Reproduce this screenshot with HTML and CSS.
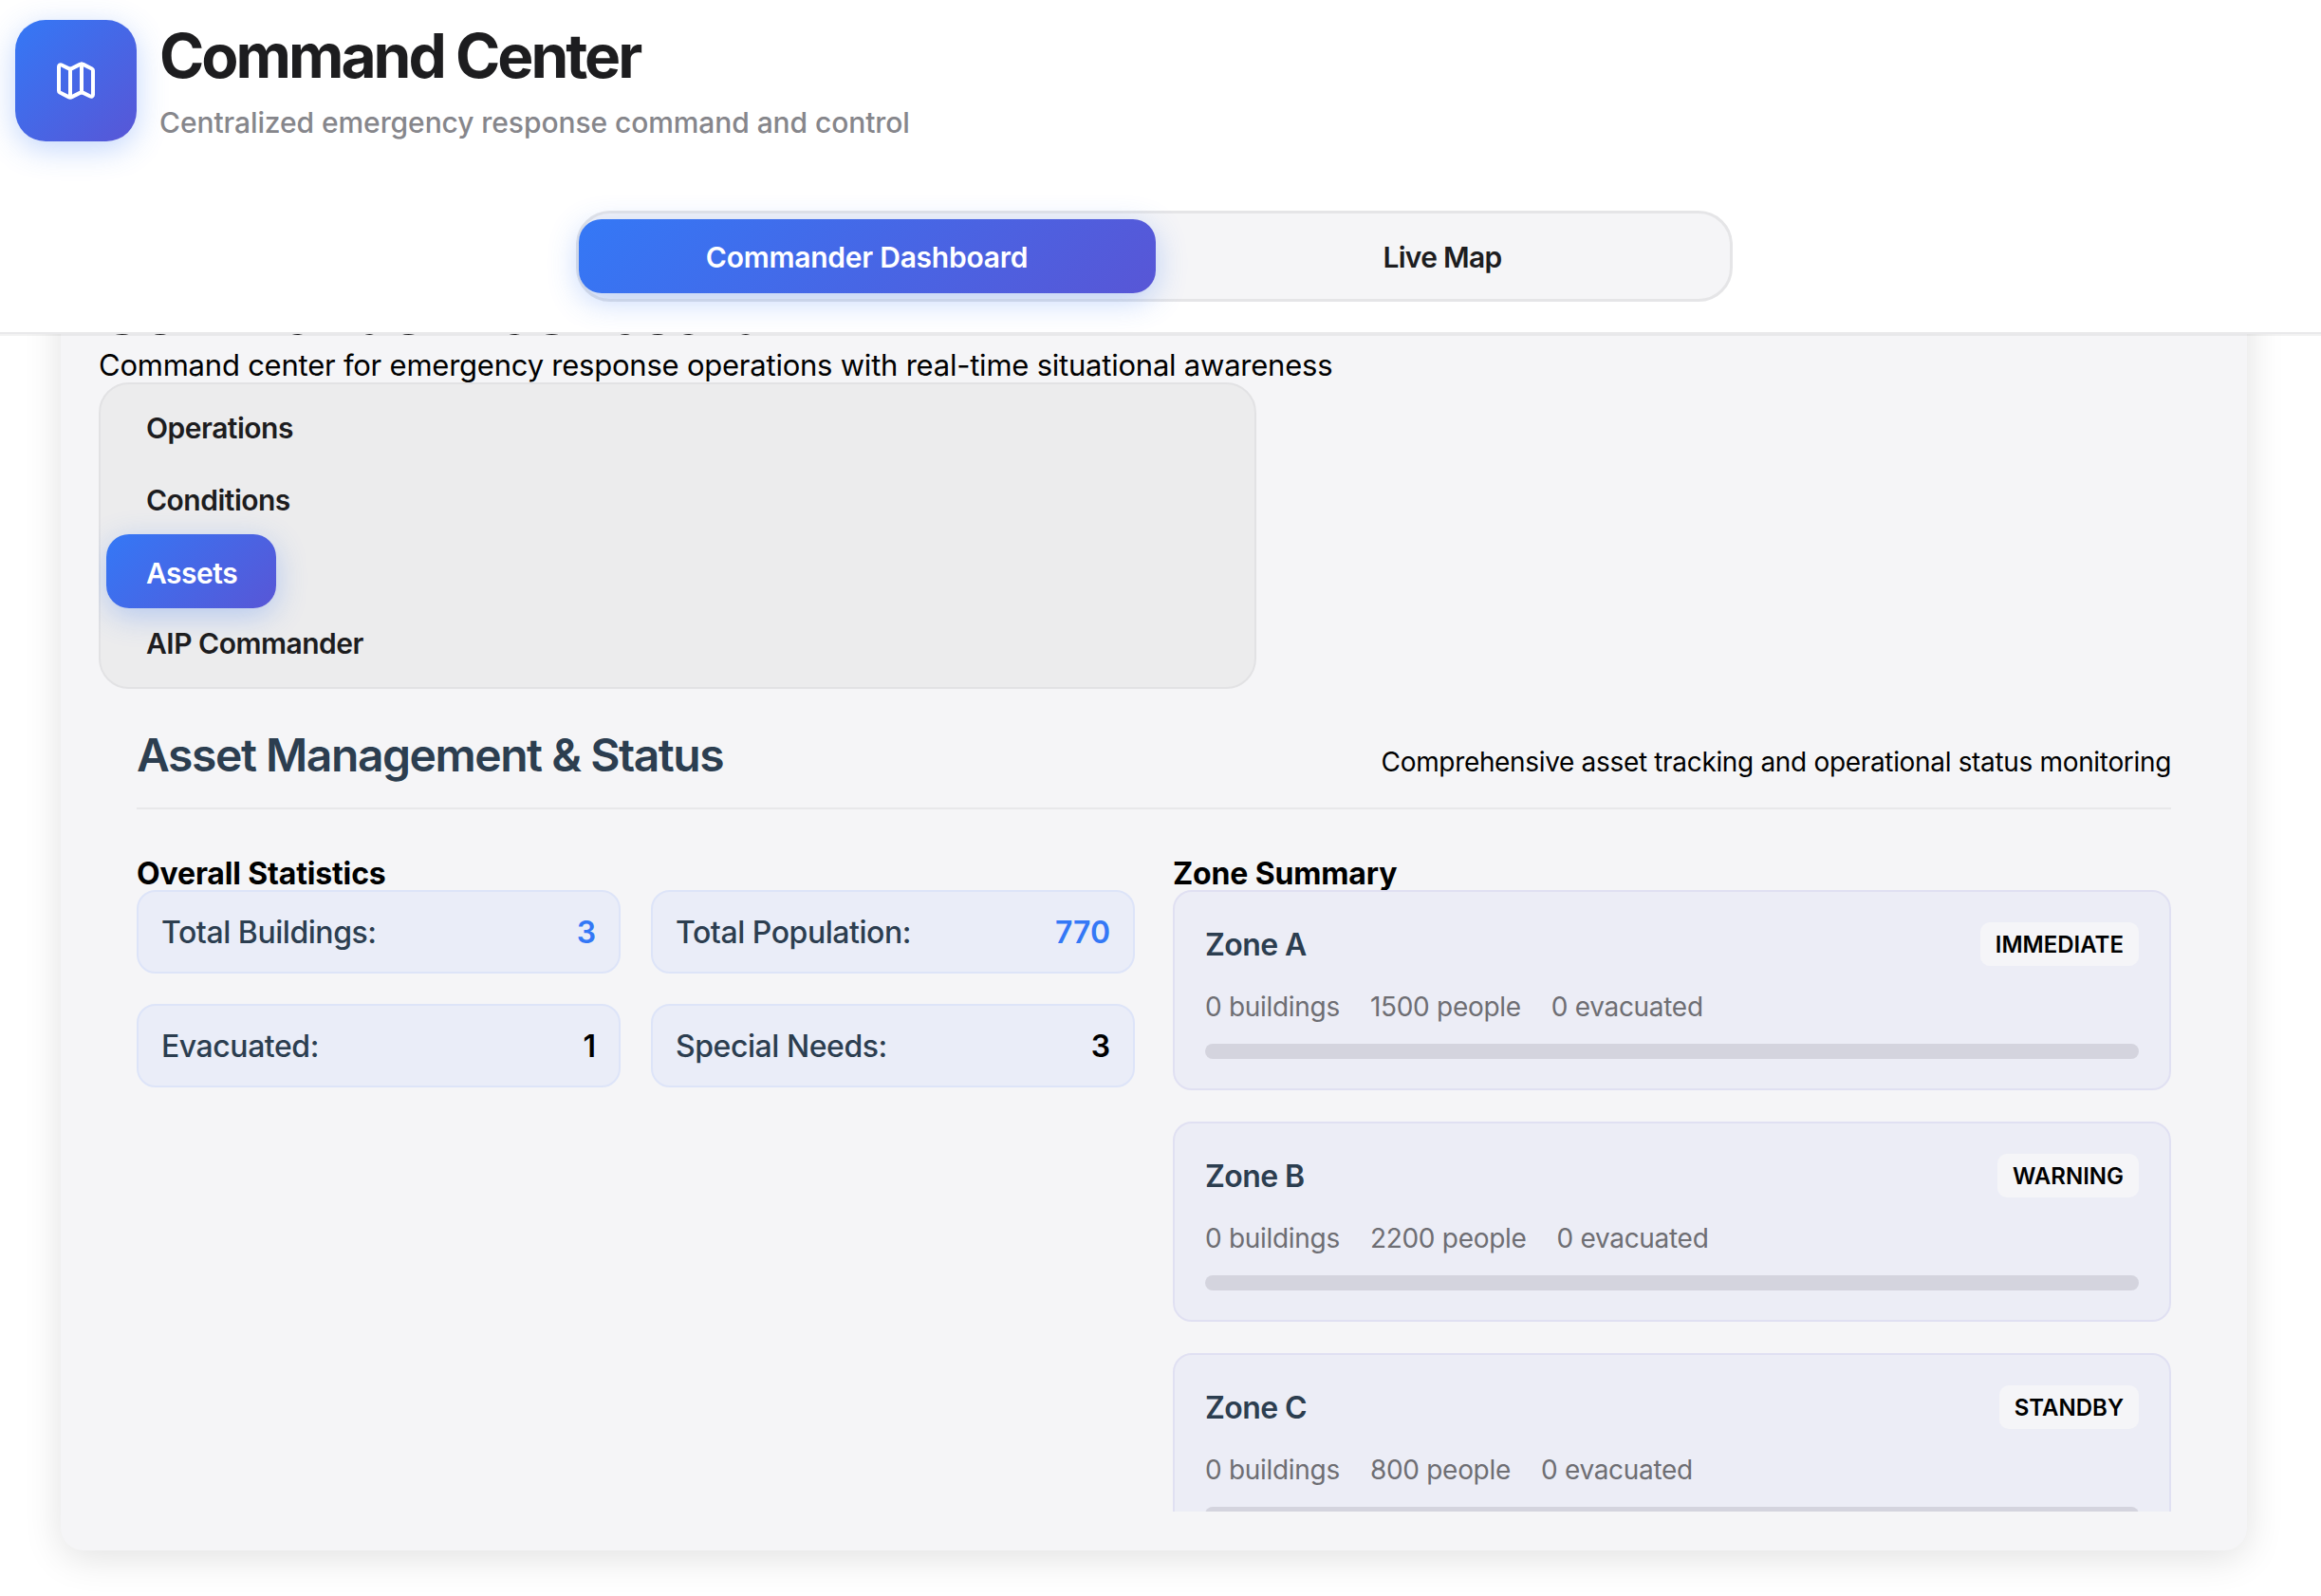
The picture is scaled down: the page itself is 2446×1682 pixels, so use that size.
FILE: index.html
```html
<!DOCTYPE html>
<html lang="en">
<head>
<meta charset="utf-8">
<title>Command Center</title>
<link rel="stylesheet" href="styles.css">
</head>
<body>
<header class="app-header">
  <div class="brand">
    <div class="brand-icon">
      <svg class="map-icon" viewBox="0 0 24 24" width="48" height="48" fill="none" stroke="#fff" stroke-width="2" stroke-linecap="round" stroke-linejoin="round">
        <path d="M14.106 5.553a2 2 0 0 0 1.788 0l3.659-1.83A1 1 0 0 1 21 4.619v12.764a1 1 0 0 1-.553.894l-4.553 2.277a2 2 0 0 1-1.788 0l-4.212-2.106a2 2 0 0 0-1.788 0l-3.659 1.83A1 1 0 0 1 3 19.381V6.618a1 1 0 0 1 .553-.894l4.553-2.277a2 2 0 0 1 1.788 0z"/>
        <path d="M15 5.764v15"/>
        <path d="M9 3.236v15"/>
      </svg>
    </div>
    <div class="brand-text">
      <h1 class="brand-title">Command Center</h1>
      <p class="brand-sub">Centralized emergency response command and control</p>
    </div>
  </div>
  <nav class="view-nav">
    <div class="view-tabs">
      <button class="view-tab view-tab-active">Commander Dashboard</button>
      <button class="view-tab">Live Map</button>
    </div>
  </nav>
</header>

<main class="panel">
  <div class="panel-scroll">
    <h2 class="panel-title">Commander Dashboard</h2>
    <p class="panel-desc">Command center for emergency response operations with real-time situational awareness</p>
    <div class="side-tabs">
      <button class="side-tab">Operations</button>
      <button class="side-tab">Conditions</button>
      <button class="side-tab side-tab-active">Assets</button>
      <button class="side-tab">AIP Commander</button>
    </div>
    <section class="assets">
      <div class="assets-head">
        <h3 class="assets-title">Asset Management &amp; Status</h3>
        <p class="assets-note">Comprehensive asset tracking and operational status monitoring</p>
      </div>
      <div class="assets-grid">
        <div class="col">
          <h4 class="col-title">Overall Statistics</h4>
          <div class="stats">
            <div class="stat"><span>Total Buildings:</span><strong class="stat-blue">3</strong></div>
            <div class="stat"><span>Total Population:</span><strong class="stat-blue">770</strong></div>
            <div class="stat"><span>Evacuated:</span><strong>1</strong></div>
            <div class="stat"><span>Special Needs:</span><strong>3</strong></div>
          </div>
        </div>
        <div class="col">
          <h4 class="col-title">Zone Summary</h4>
          <div class="zones">
            <article class="zone">
              <div class="zone-head"><span class="zone-name">Zone A</span><span class="zone-badge">IMMEDIATE</span></div>
              <div class="zone-meta"><span>0 buildings</span><span>1500 people</span><span>0 evacuated</span></div>
              <div class="zone-bar"></div>
            </article>
            <article class="zone">
              <div class="zone-head"><span class="zone-name">Zone B</span><span class="zone-badge">WARNING</span></div>
              <div class="zone-meta"><span>0 buildings</span><span>2200 people</span><span>0 evacuated</span></div>
              <div class="zone-bar"></div>
            </article>
            <article class="zone">
              <div class="zone-head"><span class="zone-name">Zone C</span><span class="zone-badge">STANDBY</span></div>
              <div class="zone-meta"><span>0 buildings</span><span>800 people</span><span>0 evacuated</span></div>
              <div class="zone-bar"></div>
            </article>
          </div>
        </div>
      </div>
    </section>
  </div>
</main>
</body>
</html>
```
FILE: styles.css
```css
* { box-sizing: border-box; }
html, body { margin: 0; padding: 0; }
body {
  width: 2446px;
  height: 1682px;
  overflow: hidden;
  background: #fff;
  font-family: Inter, "Liberation Sans", sans-serif;
  color: #000;
}
h1, h2, h3, h4, p { margin: 0; }
button { font: inherit; border: 0; background: none; cursor: pointer; }

.app-header {
  position: relative;
  z-index: 2;
  height: 352px;
  padding: 21px 14px 0 16px;
  background: #fff;
  border-bottom: 2px solid #e9e9eb;
  box-shadow: 0 2px 0 rgba(0, 0, 0, 0.05);
}
.brand { display: flex; gap: 24px; align-items: flex-start; height: 128px; }
.brand-icon {
  width: 128px;
  height: 128px;
  border-radius: 32px;
  background: linear-gradient(135deg, #3478f6, #5856d6);
  box-shadow: 0 8px 32px rgba(52, 120, 246, 0.3);
  display: flex;
  align-items: center;
  justify-content: center;
}
.map-icon { transform: scaleX(-1); }
.brand-title {
  font-size: 64px;
  line-height: 76px;
  font-weight: 700;
  letter-spacing: -3px;
  color: #1d1d1f;
}
.brand-sub {
  margin-top: 13.5px;
  font-size: 30px;
  line-height: 36px;
  font-weight: 500;
  letter-spacing: -0.08px;
  color: #86868b;
}
.view-nav { display: flex; justify-content: center; margin: 73px 0 0 -16px; }
.view-tabs {
  display: flex;
  width: 1219px;
  padding: 6px 0;
  background: #f5f5f7;
  border: 3px solid #e5e5e7;
  border-radius: 36px;
}
.view-tab {
  flex: 1;
  height: 78px;
  padding-top: 2px;
  border-radius: 24px;
  font-size: 30px;
  font-weight: 600;
  letter-spacing: -0.7px;
  color: #1d1d1f;
}
.view-tab-active {
  flex: none;
  width: 608px;
  letter-spacing: -0.25px;
  color: #fff;
  background: linear-gradient(135deg, #3478f6, #5856d6);
  box-shadow: 0 8px 32px rgba(52, 120, 246, 0.3);
}

.panel {
  width: 2304px;
  height: 1400px;
  margin: -118px 0 0 64px;
  padding: 0 40px 41px;
  background: #f5f5f7;
  border-radius: 24px;
  box-shadow: 0 8px 40px rgba(0, 0, 0, 0.12);
  display: flex;
}
.panel-scroll { flex: 1; min-width: 0; overflow: hidden; padding-top: 57px; }
.panel-title {
  font-size: 64px;
  line-height: 76px;
  height: 66px;
  font-weight: 700;
  letter-spacing: -2px;
  color: #1d1d1f;
}
.panel-desc {
  font-size: 31px;
  line-height: 38px;
  height: 37px;
  margin-top: 9px;
  letter-spacing: -0.23px;
}

.side-tabs {
  display: flex;
  flex-direction: column;
  align-items: flex-start;
  width: 1220px;
  padding: 8px 6px;
  background: #ececed;
  border: 2px solid #e2e2e4;
  border-radius: 32px;
}
.side-tab {
  padding: 0 42px;
  height: 75.75px;
  border-radius: 24px;
  font-size: 30px;
  font-weight: 600;
  letter-spacing: -0.5px;
  color: #1d1d1f;
}
.side-tab-active {
  height: 78px;
  margin: -1.125px 0;
  padding: 3px 41px 0 42px;
  color: #fff;
  background: linear-gradient(135deg, #3478f6, #5856d6);
  box-shadow: 0 8px 32px rgba(52, 120, 246, 0.3);
}

.assets { padding: 0 40px; margin-top: 39px; }
.assets-head {
  display: flex;
  justify-content: space-between;
  align-items: flex-end;
  padding-bottom: 23.5px;
  border-bottom: 2px solid #e8e8ea;
}
.assets-title { font-size: 48px; line-height: 62px; font-weight: 600; color: #2c3e50; letter-spacing: -1.45px; }
.assets-note { font-size: 28px; line-height: 34px; margin-bottom: 7px; letter-spacing: -0.33px; }

.assets-grid { display: grid; grid-template-columns: 1052px 1052px; gap: 40px; margin-top: 49.5px; }
.col-title { font-size: 32px; line-height: 38px; font-weight: 700; height: 36px; letter-spacing: -0.15px; }
.stats { display: grid; grid-template-columns: 510px 510px; gap: 32px; }
.stat {
  height: 88px;
  padding: 0 24px;
  display: flex;
  align-items: center;
  justify-content: space-between;
  background: #eaedf8;
  border: 2px solid #dde4f8;
  border-radius: 20px;
  font-size: 32px;
  font-weight: 500;
  letter-spacing: -0.45px;
  color: #2c3e50;
}
.stat strong { font-weight: 600; letter-spacing: 0; color: #000; }
.stat .stat-blue { color: #3478f6; }

.zones { display: flex; flex-direction: column; gap: 33px; }
.zone {
  height: 211px;
  flex: none;
  padding: 32px;
  background: #ecedf6;
  border: 2px solid #e0e0f2;
  border-radius: 20px;
}
.zone-head { display: flex; justify-content: space-between; align-items: center; }
.zone-name { font-size: 32px; font-weight: 600; letter-spacing: -0.6px; color: #2c3e50; }
.zone-badge {
  height: 46px;
  padding: 0 16px;
  display: flex;
  align-items: center;
  background: #f5f5f8;
  border-radius: 10px;
  font-size: 24px;
  font-weight: 600;
  color: #000;
}
.zone-meta {
  display: flex;
  gap: 32px;
  margin-top: 26px;
  font-size: 28px;
  line-height: 34px;
  letter-spacing: -0.3px;
  color: #6e6e73;
}
.zone-bar { height: 16px; margin-top: 22px; background: #d4d4de; border-radius: 8px; }
```
